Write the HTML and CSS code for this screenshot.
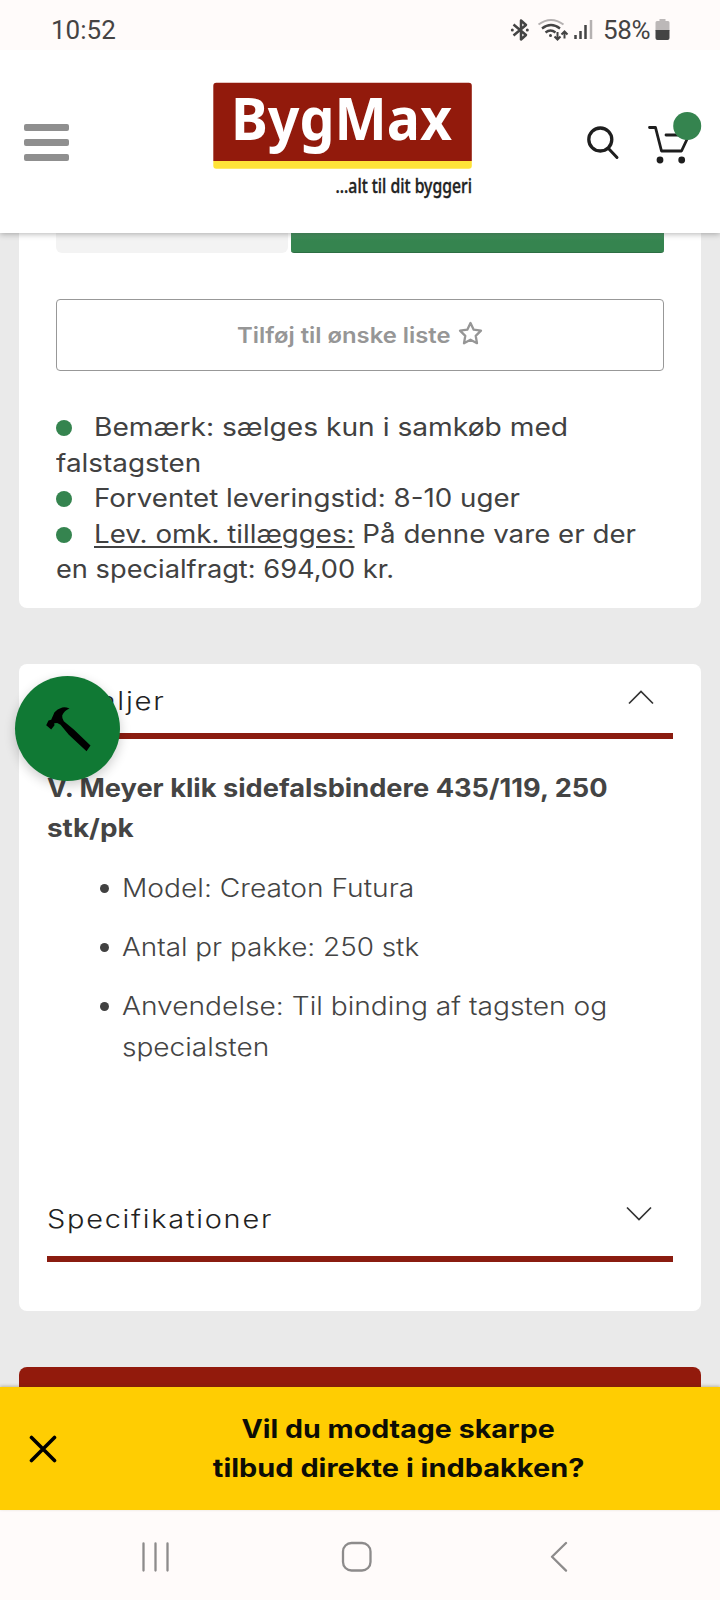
FILE: index.html
```html
<!DOCTYPE html>
<html lang="da">
<head>
<meta charset="utf-8">
<title>BygMax</title>
<link rel="stylesheet" href="styles.css">
</head>
<body>
<div class="screen">
  <div class="status">
    <span class="time">10:52</span>
    <svg class="status-icons" width="88" height="26" viewBox="511 17 88 26" fill="none" stroke="#444" stroke-width="2">
      <path d="M514.500 24.500l12.500 10.500-5 4.500v-19l5 4.500-12.500 10.500" stroke-linejoin="round" stroke-width="2.500"/>
      <circle cx="513.300" cy="30" r="1.500" fill="#444" stroke="none"/><circle cx="528.300" cy="30" r="1.500" fill="#444" stroke="none"/>
      <path d="M539.500 24.500q12.500-9 25 0" stroke="#b5b1b1"/>
      <path d="M543 28.500q9-7 18 0M546.500 32.500q5-4 10 0" stroke-width="2.300"/>
      <circle cx="551.500" cy="35.500" r="1.500" fill="#444" stroke="none"/>
      <path d="M558.500 32v7.500m-3-3 3 3 3-3M565.500 38.500v-7m-3 3 3-3 3 3" stroke-width="2"/>
      <path d="M576.500 35v4M581.500 31v8M586.500 25v14" stroke-width="2.500"/>
      <path d="M592 20v19" stroke="#b5b1b1" stroke-width="2.500"/>
    </svg>
    <span class="percent">58%</span>
    <svg class="battery" width="15" height="22" viewBox="0 0 15 22"><path d="M4.500 0h6v2H13q1.500 0 1.500 1.500V12H.5V3.500Q.5 2 2 2h2.500z" fill="#bcb8b8"/><path d="M.5 11h14v8q0 2-2 2h-10q-2 0-2-2z" fill="#444"/></svg>
  </div>
  <header class="header">
    <div class="burger"><i></i><i></i><i></i></div>
    <svg class="logo" width="260" height="122" viewBox="213 82 260 122">
      <path d="M213.300 161h258.500v4.700q0 3-3 3H216.300q-3 0-3-3z" fill="#ffe338"/>
      <path d="M213.300 161V85.700q0-3 3-3h252.500q3 0 3 3V161z" fill="#921a0c"/>
      <text class="brand" x="231" y="140" textLength="221" lengthAdjust="spacingAndGlyphs">BygMax</text>
      <text class="tagline" x="335.500" y="193" textLength="136.500" lengthAdjust="spacingAndGlyphs">...alt til dit byggeri</text>
    </svg>
    <svg class="tools" width="130" height="70" viewBox="580 105 130 70" fill="none" stroke="#1e1e1e" stroke-width="3" stroke-linecap="round" stroke-linejoin="round">
      <circle cx="600.300" cy="139.500" r="11.500" stroke-width="3.300"/><path d="M608.500 148.500l8.500 9"/>
      <path d="M649.500 127.500h6l6 23.500h20l8-17M666 135h22" stroke-width="2.800"/>
      <g fill="#1e1e1e" stroke="none"><circle cx="660" cy="160" r="3.400"/><circle cx="681.700" cy="160" r="3.400"/></g>
      <circle cx="687.200" cy="126" r="14" fill="#35844f" stroke="none"/>
    </svg>
  </header>
  <main class="main">
    <section class="card buy">
      <div class="actions"><div class="qty"></div><div class="add"></div></div>
      <div class="wish"><span class="t w110">Tilføj til ønske liste</span>
        <svg width="25" height="25" viewBox="0 0 25 25" fill="none" stroke="#969696" stroke-width="2.300" stroke-linejoin="round"><path d="M12.500 2l3.200 6.700 7.300 1-5.300 5.100 1.300 7.400-6.500-3.500L6 22.200l1.300-7.400L2 9.700l7.300-1z"/></svg>
      </div>
      <div class="notes">
        <p><b class="dot"></b><span class="t w125">Bemærk: sælges kun i samkøb med</span></p>
        <p><span class="t w111">falstagsten</span></p>
        <p><b class="dot"></b><span class="t w110">Forventet leveringstid: 8-10 uger</span></p>
        <p><b class="dot"></b><span class="t w110"><u>Lev. omk. tillægges:</u> På denne vare er der</span></p>
        <p><span class="t w109">en specialfragt: 694,00 kr.</span></p>
      </div>
    </section>
    <section class="card info">
      <div class="fold first"><span class="t w117">Detaljer</span><svg width="28" height="16" viewBox="0 0 28 16" fill="none" stroke="#333" stroke-width="1.700"><path d="M2 14.500L14 2.500l12 12"/></svg></div>
      <h2><span class="t w109">V. Meyer klik sidefalsbindere 435/119, 250</span><br><span class="t w111">stk/pk</span></h2>
      <ul>
        <li><span class="t w125">Model: Creaton Futura</span></li>
        <li><span class="t w111">Antal pr pakke: 250 stk</span></li>
        <li><span class="t w125">Anvendelse: Til binding af tagsten og</span><br><span class="t w112">specialsten</span></li>
      </ul>
      <div class="fold second"><span class="t w115">Specifikationer</span><svg width="28" height="16" viewBox="0 0 28 16" fill="none" stroke="#333" stroke-width="1.700"><path d="M2 1.500l12 12 12-12"/></svg></div>
      <div class="fab"><svg width="46" height="46" viewBox="0 0 46 46"><path d="M1.200 19.200L6.200 23.500l3.300-4.300-.3-2 3-.3 3.300 1.900 8.300 10L41.500 45.200l4-5.700L28.800 23.500l-10-8.300q-2-3-1.600-5.700 2-5 7.300-7Q20 .5 17.200 1.500 12 3 9.500 6.200l-3.300 7.600-2.700.7z"/></svg></div>
    </section>
    <section class="next"></section>
  </main>
  <aside class="promo">
    <svg width="28" height="28" viewBox="0 0 28 28" fill="none" stroke="#000" stroke-width="3.600" stroke-linecap="round"><path d="M2.500 2.500l23 23M25.500 2.500l-23 23"/></svg>
    <p><span class="t w114">Vil du modtage skarpe</span><br><span class="t w115">tilbud direkte i indbakken?</span></p>
  </aside>
  <nav class="nav">
    <svg width="430" height="34" viewBox="140 1540 430 34" fill="none" stroke="#8d8b8b" stroke-width="2.300" stroke-linecap="round" stroke-linejoin="round"><path d="M143.500 1543.500v27M155.500 1543.500v27M167.500 1543.500v27M566 1543l-14 13.800 14 13.800"/><rect x="343" y="1543" width="27.500" height="27.500" rx="8.500"/></svg>
  </nav>
</div>
</body>
</html>
```
FILE: styles.css
```css
* { box-sizing: border-box; }
body { margin: 0; font-family: Inter, "Open Sans", sans-serif; color: #414141; }
p, h2, ul { margin: 0; padding: 0; }

.t { display: inline-block; transform-origin: left center; }
.w109 { transform: scaleX(1.089); }
.w110 { transform: scaleX(1.108); }
.w111 { transform: scaleX(1.115); }
.w112 { transform: scaleX(1.122); }
.w114 { transform: scaleX(1.143); }
.w115 { transform: scaleX(1.157); }
.w117 { transform: scaleX(1.175); }
.w125 { transform: scaleX(1.127); }

.screen { width: 720px; height: 1600px; display: flex; flex-direction: column; overflow: hidden; background: #eaeaea; }
.status { height: 50px; flex: none; display: flex; align-items: flex-start; padding: 17px 0 0 51px; background: #fffbfa; font-family: Roboto, sans-serif; font-size: 26px; line-height: 26px; color: #454343; }
.time { width: 459px; }
.percent { width: 50px; margin-left: 5px; letter-spacing: -.4px; }
.battery { margin: 2px 0 0 2px; }
.header { height: 183px; flex: none; display: flex; background: #fff; padding: 32px 0 0 24px; position: relative; box-shadow: 0 1px 6px rgba(0,0,0,.3); clip-path: inset(0 0 -12px 0); }
.burger { display: flex; flex-direction: column; gap: 7.500px; margin: 41.500px 144px 0 0; }
.burger i { width: 45px; height: 7.500px; border-radius: 2px; background: #8f8f8f; }
.logo { overflow: visible; }
.brand { font: 700 60px "Noto Sans", sans-serif; fill: #fff; }
.tagline { font: 500 19.500px "Noto Sans", sans-serif; fill: #222; stroke: #222; stroke-width: .4px; }
.tools { margin: 23px 0 0 107px; }
.main { flex: 1; min-height: 0; overflow: hidden; padding: 0 19px; }
.card { background: #fff; border-radius: 8px; }
.buy { height: 374.500px; padding: 0 37px; border-radius: 0 0 8px 8px; }
.actions { display: flex; gap: 3px; height: 19.500px; }
.qty { width: 232px; background: #f3f3f3; border-radius: 0 0 6px 6px; }
.add { flex: 1; background: linear-gradient(#4c9565, #35844f 8px); border-radius: 0 0 3px 3px; border-bottom: 1.500px solid #2c6e43; }
.wish { height: 72px; margin-top: 46.500px; border: 1.500px solid #989898; border-radius: 4px; display: flex; align-items: center; justify-content: center; gap: 9px; font-size: 21.500px; font-weight: 600; color: #969696; }
.wish .t { margin-right: 20px; }
.wish svg { margin-top: -3px; }
.notes { padding-top: 39px; font-size: 25px; line-height: 35.600px; font-weight: 420; }
.notes p, .fold, h2, li { white-space: nowrap; }
.notes p { display: flex; align-items: center; height: 35.600px; }
.dot { width: 16px; height: 16px; border-radius: 50%; background: #35844f; margin: 1px 22px 0 0; }
u { text-decoration-thickness: 1.500px; text-underline-offset: 3px; text-decoration-skip-ink: auto; }
.info { position: relative; margin-top: 56.500px; height: 647px; padding: 0 28px; }
.fold { display: flex; justify-content: space-between; font-size: 25px; font-weight: 300; letter-spacing: 1.500px; line-height: 34px; color: #222; border-bottom: 6px solid #8a1c10; }
.first { height: 75px; padding: 20px 18px 0 0; }
.second { height: 75px; margin-top: 119px; padding: 15px 20px 0 0; }
.first svg { margin-top: 5px; }
.second svg { margin-top: 4px; }
h2 { margin-top: 28.500px; font-size: 25px; line-height: 40.800px; font-weight: 700; color: #444; }
ul { list-style: none; padding: 18.500px 0 0 75px; font-size: 25px; line-height: 40.800px; font-weight: 350; color: #444; }
li { margin-bottom: 18.500px; position: relative; }
li::before { content: ""; position: absolute; left: -22px; top: 16px; width: 9px; height: 9px; border-radius: 50%; background: #414141; }
.fab { position: absolute; left: -4px; top: 12px; width: 105px; height: 105px; border-radius: 50%; background: #107934; display: flex; align-items: center; justify-content: center; box-shadow: 0 4px 12px rgba(0,0,0,.2); }
.next { margin-top: 56px; height: 30px; border-radius: 8px 8px 0 0; background: #921a0c; }
.promo { height: 123px; flex: none; display: flex; align-items: center; background: #ffcd02; color: #0d0d05; padding-left: 29px; position: relative; box-shadow: 0 -1px 3px rgba(80,60,0,.3); }
.promo p { flex: 1; padding-left: 20px; text-align: center; font-size: 25px; font-weight: 700; line-height: 39px; }
.promo .t { transform-origin: center; }
.nav { height: 90px; flex: none; background: #fffbfa; padding: 30px 0 0 140px; }
```
